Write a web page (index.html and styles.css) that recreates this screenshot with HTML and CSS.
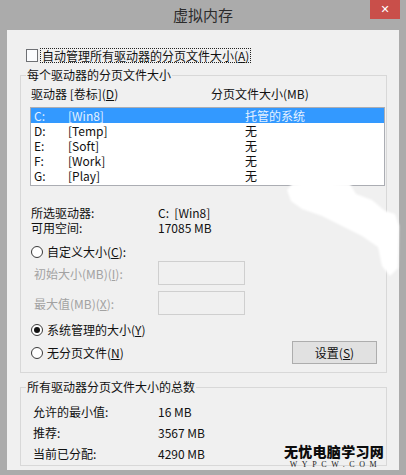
FILE: index.html
```html
<!DOCTYPE html>
<html lang="zh-CN">
<head>
<meta charset="utf-8">
<title>虚拟内存</title>
<link rel="stylesheet" href="styles.css">
</head>
<body>
<div class="window">
  <div class="titlebar">
    <span class="title">虚拟内存</span>
    <span class="close">✕</span>
  </div>
  <div class="client">
    <div class="auto-row">
      <span class="checkbox"></span>
      <span class="focus">自动管理所有驱动器的分页文件大小(<u>A</u>)</span>
    </div>

    <fieldset class="group group-one">
      <legend>每个驱动器的分页文件大小</legend>
      <div class="list-head">
        <span>驱动器 [卷标](<u>D</u>)</span>
        <span>分页文件大小(MB)</span>
      </div>
      <div class="listbox">
        <div class="lrow selected"><span>C:</span><span>[Win8]</span><span>托管的系统</span></div>
        <div class="lrow"><span>D:</span><span>[Temp]</span><span>无</span></div>
        <div class="lrow"><span>E:</span><span>[Soft]</span><span>无</span></div>
        <div class="lrow"><span>F:</span><span>[Work]</span><span>无</span></div>
        <div class="lrow"><span>G:</span><span>[Play]</span><span>无</span></div>
      </div>
      <div class="info">
        <div class="irow"><span>所选驱动器:</span><span>C:&nbsp;&nbsp;[Win8]</span></div>
        <div class="irow"><span>可用空间:</span><span>17085 MB</span></div>
      </div>
      <div class="radio-row custom"><span class="radio"></span><span>自定义大小(<u>C</u>):</span></div>
      <div class="field-row first"><span class="flabel">初始大小(MB)(<u>I</u>):</span><span class="input"></span></div>
      <div class="field-row second"><span class="flabel">最大值(MB)(<u>X</u>):</span><span class="input"></span></div>
      <div class="radio-row system"><span class="radio on"></span><span>系统管理的大小(<u>Y</u>)</span></div>
      <div class="last-row">
        <div class="radio-row"><span class="radio"></span><span>无分页文件(<u>N</u>)</span></div>
        <span class="button">设置(<u>S</u>)</span>
      </div>
    </fieldset>

    <fieldset class="group group-two">
      <legend>所有驱动器分页文件大小的总数</legend>
      <div class="trow first"><span>允许的最小值:</span><span>16 MB</span></div>
      <div class="trow"><span>推荐:</span><span>3567 MB</span></div>
      <div class="trow"><span>当前已分配:</span><span>4290 MB</span></div>
    </fieldset>
  </div>

  <svg class="smudge" width="406" height="475" viewBox="0 0 406 475">
    <path d="M287 190 L292 184 L312 182 L350 184 L356 194 L372 200 L385 211 L395 214 L399 226 L398 268 L390 276 L382 266 L378 247 L362 236 L342 226 L322 216 L302 209 L291 201 Z" fill="#ffffff"/>
  </svg>
  <div class="watermark">
    <div class="wm-cn">无忧电脑学习网</div>
    <div class="wm-en">WYPCW.COM</div>
  </div>
</div>
</body>
</html>
```

FILE: styles.css
```css
* { box-sizing: border-box; }
html, body { margin: 0; padding: 0; }
body {
  width: 406px;
  height: 475px;
  overflow: hidden;
  font-family: "Noto Sans CJK SC", "Noto Sans", sans-serif;
  font-size: 12px;
  color: #111;
}
u { text-decoration: underline; text-underline-offset: 1px; }

.window {
  position: relative;
  width: 406px;
  height: 475px;
  background: #ababab;
  padding: 0 7px 5px 7px;
  display: flex;
  flex-direction: column;
}

.titlebar {
  height: 30px;
  flex: none;
  display: flex;
  align-items: center;
  justify-content: center;
}
.title {
  font-size: 15px;
  line-height: 18px;
  color: #2b2b2b;
}
.close {
  position: absolute;
  top: 0;
  left: 370px;
  width: 30px;
  height: 19px;
  background: #c94f4a;
  color: #fff;
  font-size: 11px;
  line-height: 19px;
  text-align: center;
  font-family: "DejaVu Sans", sans-serif;
}

.client {
  flex: 1;
  min-height: 0;
  background: #f0f0f0;
  padding: 16px 12px 0 13px;
}

.auto-row {
  height: 18px;
  display: flex;
  align-items: center;
  margin-left: 6px;
}
.checkbox {
  width: 12px;
  height: 13px;
  border: 1px solid #6e7074;
  background: #fbfcfe;
  margin-right: 3px;
}
.focus {
  outline: 1px dotted #222;
  outline-offset: 0;
  line-height: 13px;
  padding: 0 1px;
}

.group {
  margin: 0;
  border: 1px solid #d8d8d8;
  padding: 0 1px 0 10px;
  min-width: 0;
}
.group legend {
  padding: 0 1px;
  margin-left: -5px;
  line-height: 14px;
  color: #111;
}
.group-one {
  margin-top: 4px;
  padding-bottom: 8px;
}
.group-two {
  margin-top: 7px;
  padding-bottom: 1px;
}

.list-head {
  margin-top: 5px;
  line-height: 14px;
  display: grid;
  grid-template-columns: 180px 1fr;
}
.listbox {
  margin-top: 6px;
  margin-left: -1px;
  width: 355px;
  height: 79px;
  border: 1px solid #abadb3;
  background: #fff;
  padding: 0 0 2px 0;
}
.lrow {
  height: 15px;
  line-height: 15px;
  display: grid;
  grid-template-columns: 34px 177px 1fr;
  padding-left: 3px;
  color: #111;
}
.lrow.selected {
  background: #3399ff;
  color: #e4f1ff;
}

.info { margin-top: 19px; }
.irow {
  height: 15px;
  line-height: 15px;
  display: grid;
  grid-template-columns: 127px 1fr;
}

.radio-row {
  display: flex;
  align-items: center;
  height: 16px;
  line-height: 16px;
}
.radio {
  width: 12px;
  height: 12px;
  border: 1px solid #3a3a3a;
  border-radius: 50%;
  background: #fff;
  margin-right: 4px;
  flex: none;
  display: flex;
  align-items: center;
  justify-content: center;
}
.radio.on::after {
  content: "";
  width: 6px;
  height: 6px;
  border-radius: 50%;
  background: #111;
}
.custom { margin-top: 9px; }
.system { margin-top: 7px; }

.field-row {
  display: grid;
  grid-template-columns: 124px 87px;
  align-items: center;
  padding-left: 3px;
  color: #a2a2a2;
}
.field-row.first { margin-top: 1px; }
.field-row.second { margin-top: 6px; }
.input {
  height: 24px;
  border: 1px solid #cfcfcf;
  background: #f0f0f0;
}

.last-row {
  margin-top: 3px;
  height: 23px;
  display: flex;
  align-items: center;
  justify-content: space-between;
  padding-right: 8px;
}
.button {
  width: 85px;
  height: 23px;
  border: 1px solid #adadad;
  background: #e1e1e1;
  text-align: center;
  line-height: 21px;
}

.trow {
  height: 21px;
  line-height: 21px;
  display: grid;
  grid-template-columns: 125px 1fr;
  padding-left: 2px;
}
.trow.first { margin-top: 7px; }

.smudge {
  position: absolute;
  left: 0;
  top: 0;
  pointer-events: none;
  filter: blur(1px);
}

.watermark {
  position: absolute;
  left: 280px;
  top: 442px;
  width: 108px;
  text-align: center;
  white-space: nowrap;
}
.wm-cn {
  font-size: 14px;
  line-height: 18px;
  font-weight: 900;
  letter-spacing: 0.3px;
  color: #0c0c0c;
}
.wm-en {
  font-family: "Liberation Serif", serif;
  font-size: 8px;
  line-height: 9px;
  letter-spacing: 4.6px;
  color: #222;
  margin-left: 3px;
}
```
